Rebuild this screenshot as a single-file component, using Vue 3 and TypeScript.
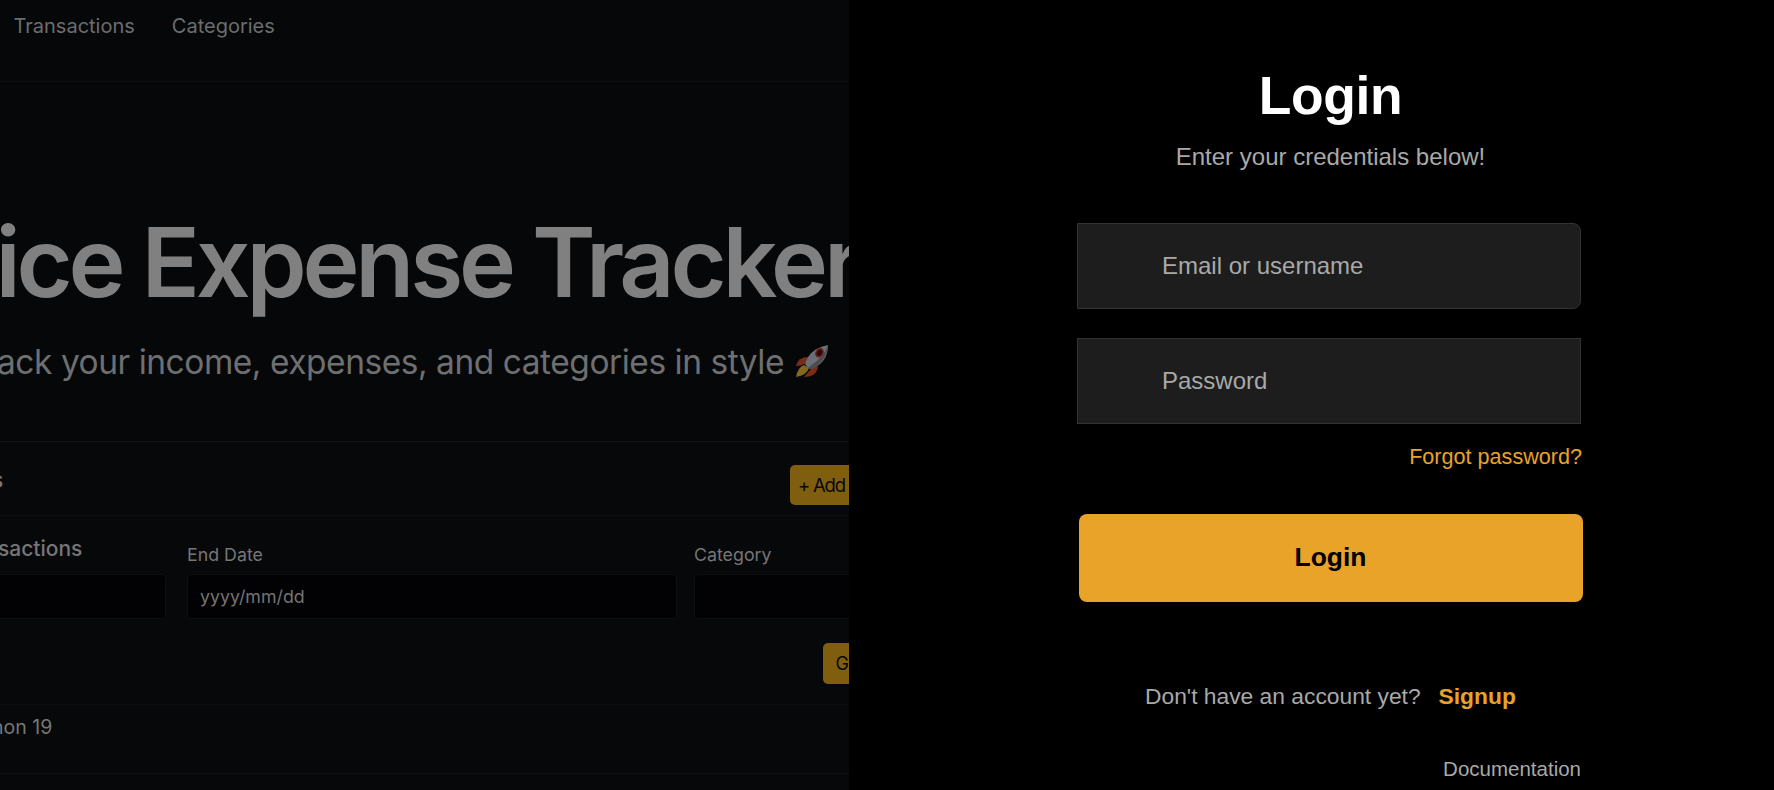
<script setup lang="ts">
import { ref } from 'vue'

const identifier = ref('')
const password = ref('')
const navLinks: string[] = ['Transactions', 'Categories']
</script>

<template>
  <main class="screen">
    <section class="preview" aria-hidden="true">
      <nav class="nav">
        <span v-for="link in navLinks" :key="link">{{ link }}</span>
      </nav>
      <div class="hero">
        <div class="hero-title">ice Expense Tracker</div>
        <div class="hero-sub">
          <span>ack your income, expenses, and categories in style</span>
          <svg class="rocket" viewBox="0 0 34 34">
            <path d="M1 22 Q3 13 13 13 L11 19 Q7 22 1 22Z" fill="#7a2c16" />
            <path d="M9 33 Q22 33 23 22 L17 24 Q13 28 9 33Z" fill="#7a2c16" />
            <path d="M1 33 Q3 23 9 21 L14 24 Q12 31 1 33Z" fill="#85681f" />
            <path d="M10 20 Q14 5 33 1 Q33 19 16 25 L13 24Z" fill="#6c6f73" />
            <path d="M16 25 Q31 19 33 1 Q30 12 13 24Z" fill="#494c51" />
            <ellipse cx="24.5" cy="8.8" rx="3.2" ry="4.2" transform="rotate(35 24.5 8.8)" fill="#290b0d" stroke="#702013" stroke-width="1.6" />
          </svg>
        </div>
      </div>
      <div class="toolbar">
        <span class="toolbar-title">s</span>
        <span class="chip chip-add">+ Add</span>
      </div>
      <div class="filters">
        <div class="fields">
          <div class="field field-start">
            <div class="field-heading">sactions</div>
            <div class="box"></div>
          </div>
          <div class="field field-end">
            <div class="field-label">End Date</div>
            <div class="box">yyyy/mm/dd</div>
          </div>
          <div class="field field-category">
            <div class="field-label">Category</div>
            <div class="box"></div>
          </div>
        </div>
        <div class="actions"><span class="chip chip-go">G</span></div>
      </div>
      <div class="entry">non 19</div>
    </section>

    <section class="auth">
      <form class="form" @submit.prevent>
        <header class="head">
          <h1>Login</h1>
          <p>Enter your credentials below!</p>
        </header>
        <input v-model="identifier" class="input input-user" type="text" placeholder="Email or username" />
        <input v-model="password" class="input" type="password" placeholder="Password" />
        <a class="forgot">Forgot password?</a>
        <button class="submit" type="submit">Login</button>
        <p class="signup">Don't have an account yet?<a>Signup</a></p>
        <a class="docs">Documentation</a>
      </form>
    </section>
  </main>
</template>

<style>
html,
body {
  background: #000;
  overflow: hidden;
}
</style>

<style scoped>
* {
  box-sizing: border-box;
}

.screen {
  display: flex;
  width: 1774px;
  height: 790px;
  overflow: hidden;
  background: #000;
}

/* Product preview */
.preview {
  flex: none;
  width: 849px;
  height: 790px;
  overflow: hidden;
  background: #07080a;
  color: #767677;
  font-family: Inter, sans-serif;
  white-space: nowrap;
}

.nav {
  display: flex;
  gap: 37px;
  height: 82px;
  padding: 11px 0 0 13.5px;
  border-bottom: 1px solid #0d0e10;
  background: #050709;
  color: #6c6d6e;
  font-size: 20px;
  line-height: 30px;
}

.hero {
  height: 360px;
  padding-top: 122px;
  border-bottom: 1px solid #101113;
  background: #050709;
}

.hero-title {
  margin-left: -4.5px;
  color: #808080;
  font-size: 96.5px;
  font-weight: 620;
  line-height: 116px;
  letter-spacing: -4.2px;
}

.hero-sub {
  display: flex;
  gap: 11px;
  margin: 22px 0 0 -3px;
  color: #6e6f70;
  font-size: 33.5px;
  line-height: 40px;
  letter-spacing: -0.47px;
}

.rocket {
  flex: none;
  width: 34px;
  height: 34px;
  margin-top: 2px;
}

.toolbar {
  display: flex;
  align-items: flex-start;
  justify-content: space-between;
  height: 74px;
  padding-top: 23px;
  border-bottom: 1px solid #0c0d0f;
}

.toolbar-title {
  margin-left: -9px;
  font-size: 23px;
  font-weight: 500;
  line-height: 30px;
}

.chip {
  height: 40px;
  border-radius: 5px 0 0 5px;
  background: #805e10;
  color: #08080a;
  line-height: 40px;
}

.chip-add {
  width: 59px;
  padding-left: 8px;
  font-size: 18.5px;
  letter-spacing: -1.2px;
}

.filters {
  height: 189px;
  padding-top: 16px;
  border-bottom: 1px solid #0d0e10;
}

.fields {
  display: flex;
  align-items: flex-end;
  height: 87px;
}

.field {
  flex: none;
}

.field-start {
  width: 166px;
  margin-right: 21px;
}

.field-end {
  width: 490px;
  margin-right: 17px;
}

.field-category {
  width: 190px;
}

.field-heading {
  margin: 0 0 10px -2px;
  font-size: 21px;
  font-weight: 500;
  line-height: 31px;
}

.field-label {
  margin-bottom: 6px;
  font-size: 17.8px;
  line-height: 27px;
}

.box {
  height: 45px;
  padding-left: 12px;
  border: 1px solid #0e0f11;
  border-radius: 4px;
  background: #020204;
  color: #747475;
  font-size: 17.8px;
  line-height: 43px;
}

.field-start .box {
  border-left: 0;
  border-radius: 0 4px 4px 0;
}

.actions {
  display: flex;
  justify-content: flex-end;
  margin-top: 24px;
}

.chip-go {
  width: 26px;
  height: 41px;
  padding-left: 12.5px;
  overflow: hidden;
  font-size: 18px;
  line-height: 41px;
}

.entry {
  height: 69px;
  padding-top: 11px;
  border-bottom: 1px solid #101113;
  font-size: 19.5px;
  line-height: 22px;
  text-indent: -8px;
}

/* Sign-in column */
.auth {
  flex: 1;
  padding: 66px 0 0 228px;
  background: #000;
  color: #a9a9a9;
  font-family: "Liberation Sans", Arial, sans-serif;
}

.form {
  display: flex;
  flex-direction: column;
  width: 504px;
}

.head {
  padding-left: 3px;
  text-align: center;
}

h1 {
  margin: 0;
  color: #fff;
  font-size: 53.4px;
  font-weight: 700;
  line-height: 59px;
  letter-spacing: -0.4px;
}

.head p {
  margin: 17px 0 0;
  font-size: 24px;
  line-height: 29px;
}

.input {
  width: 504px;
  height: 86px;
  margin: 29px 0 0;
  padding: 0 20px 1px 84px;
  border: 1px solid #333;
  border-radius: 0;
  outline: none;
  background: #1d1d1d;
  color: #fff;
  font-family: inherit;
  font-size: 24px;
}

.input::placeholder {
  color: #a9a9a9;
  opacity: 1;
}

.input-user {
  margin-top: 52px;
  border-radius: 0 8px 8px 0;
}

.forgot {
  align-self: flex-end;
  margin: 20px -1px 0 0;
  color: #e8a328;
  font-size: 21.6px;
  line-height: 25px;
}

.submit {
  width: 504px;
  height: 88px;
  margin: 45px 0 0 2px;
  padding: 0 1px 2px 0;
  border: 0;
  border-radius: 8px;
  background: #e8a328;
  color: #000;
  font-family: inherit;
  font-size: 26.4px;
  font-weight: 700;
}

.signup {
  display: flex;
  gap: 18px;
  margin: 81px 0 0 68px;
  font-size: 22.8px;
  line-height: 26px;
}

.signup a {
  color: #e8a328;
  font-weight: 700;
}

.docs {
  align-self: flex-end;
  margin-top: 48px;
  font-size: 20.5px;
  line-height: 23px;
}
</style>
